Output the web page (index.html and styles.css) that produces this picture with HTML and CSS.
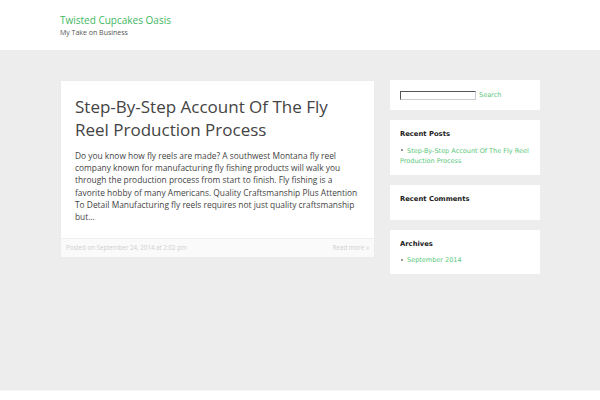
FILE: index.html
```html
<!DOCTYPE html>
<html lang="en">
<head>
  <meta charset="UTF-8">
  <title>Twisted Cupcakes Oasis</title>
  <link rel="stylesheet" href="styles.css">
</head>
<body>

<header class="site-header">
  <div class="site-title">Twisted Cupcakes Oasis</div>
  <div class="site-tagline">My Take on Business</div>
</header>

<div class="site-main">
  <div class="content">
    <article class="post">
      <div class="post-body">
        <h1 class="post-title">Step-By-Step Account Of The Fly Reel Production Process</h1>
        <p class="post-excerpt">Do you know how fly reels are made? A southwest Montana fly reel company known for manufacturing fly fishing products will walk you through the production process from start to finish. Fly fishing is a favorite hobby of many Americans. Quality Craftsmanship Plus Attention To Detail Manufacturing fly reels requires not just quality craftsmanship but&hellip;</p>
      </div>
      <div class="post-meta">
        <span>Posted on September 24, 2014 at 2:02 pm</span>
        <span>Read more &raquo;</span>
      </div>
    </article>
  </div>

  <aside class="sidebar">
    <div class="widget widget-search">
      <input type="text" class="search-field">
      <span class="search-btn">Search</span>
    </div>

    <div class="widget">
      <h3>Recent Posts</h3>
      <ul>
        <li><a href="#">Step-By-Step Account Of The Fly Reel Production Process</a></li>
      </ul>
    </div>

    <div class="widget widget-comments">
      <h3>Recent Comments</h3>
    </div>

    <div class="widget">
      <h3>Archives</h3>
      <ul>
        <li><a href="#">September 2014</a></li>
      </ul>
    </div>
  </aside>
</div>

<footer class="site-footer"></footer>

</body>
</html>
```

FILE: styles.css
```css
body {
  margin: 0;
  background: #ededed;
  font-family: "Open Sans", "DejaVu Sans", sans-serif;
  color: #444;
}

.site-header {
  background: white;
  height: 50px;
  box-sizing: border-box;
  padding: 13px 60px 0;
}

.site-title {
  color: #3fb863;
  font-size: 10px;
  line-height: 14px;
}

.site-tagline {
  color: #555;
  font-size: 7px;
  line-height: 10px;
  margin-top: 1px;
}

.site-main {
  display: flex;
  gap: 15px;
  width: 480px;
  margin: 30px 0 0 60px;
  height: 310px;
  align-items: flex-start;
}

.content {
  width: 315px;
}

.post {
  background: white;
  border: 1px solid #ebebeb;
}

.post-body {
  padding: 14px 14px 15px;
}

.post-title {
  margin: 0;
  font-weight: normal;
  font-size: 17px;
  line-height: 23px;
  color: #444;
}

.post-excerpt {
  margin: 9px 0 0;
  font-size: 8.4px;
  line-height: 12.2px;
  color: #444;
}

.post-meta {
  display: flex;
  justify-content: space-between;
  background: #fafafa;
  border-top: 1px solid #f0f0f0;
  padding: 0 5px;
  height: 18px;
  line-height: 18px;
  font-size: 6.2px;
  color: #cfcfcf;
}

.sidebar {
  width: 150px;
  display: flex;
  flex-direction: column;
  gap: 10px;
}

.widget {
  background: white;
  padding: 10px 10px 9px;
  font-family: "DejaVu Sans", sans-serif;
  font-size: 6.5px;
}

.widget-search {
  display: flex;
  align-items: center;
  gap: 3px;
  padding-bottom: 10px;
}

.widget-comments {
  padding-bottom: 17px;
}

.search-field {
  width: 76px;
  height: 9px;
  box-sizing: border-box;
  margin: 1px 0 0;
  padding: 0;
  border: 1px solid #ccc;
  border-top-color: #555;
  border-left-color: #555;
}

.search-btn {
  color: #5ac77b;
}

.widget h3 {
  margin: 0;
  font-size: 6.8px;
  line-height: 8px;
  color: #222;
}

.widget ul {
  margin: 7.5px 0 0;
  padding: 0;
  list-style: none;
}

.widget li {
  line-height: 10px;
}

.widget li::before {
  content: "";
  display: inline-block;
  width: 2px;
  height: 2px;
  background: #999;
  vertical-align: middle;
  margin: 0 4px 1px 1px;
}

.widget a {
  color: #5ac77b;
  text-decoration: none;
}

.site-footer {
  background: white;
  border-top: 1px solid #f5f5f5;
  height: 10px;
}
```
